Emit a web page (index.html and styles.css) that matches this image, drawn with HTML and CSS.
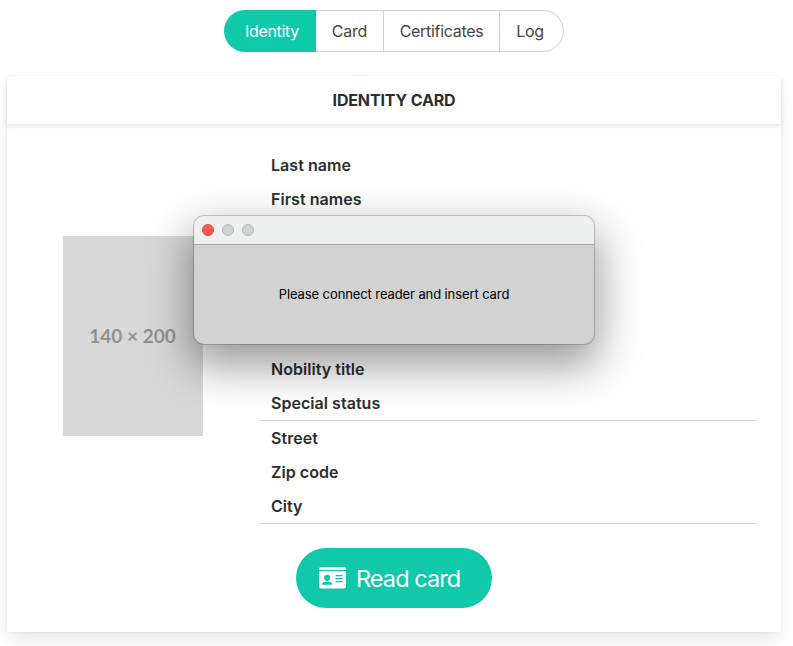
FILE: index.html
```html
<!DOCTYPE html>
<html lang="en">
<head>
<meta charset="utf-8">
<title>Identity card</title>
<link rel="stylesheet" href="styles.css">
</head>
<body>
<nav class="tabs">
  <a class="tab active"><span>Identity</span></a>
  <a class="tab tab-card"><span>Card</span></a>
  <a class="tab tab-certs"><span>Certificates</span></a>
  <a class="tab tab-log"><span>Log</span></a>
</nav>
<main class="card">
  <header class="card-header"><span>Identity card</span></header>
  <section class="content">
    <div class="portrait"><div class="photo"><span>140 × 200</span></div></div>
    <div class="details">
      <div class="group">
        <div class="row">Last name</div>
        <div class="row">First names</div>
        <div class="row"></div>
        <div class="row"></div>
        <div class="row"></div>
        <div class="row"></div>
        <div class="row">Nobility title</div>
        <div class="row">Special status</div>
      </div>
      <div class="group">
        <div class="row">Street</div>
        <div class="row">Zip code</div>
        <div class="row">City</div>
      </div>
    </div>
  </section>
  <button class="read">
    <svg class="id-icon" viewBox="0 0 27 22" width="27" height="22">
      <path fill="#fff" d="M2.3 0h22.4A2.3 2.3 0 0 1 27 2.9H0A2.3 2.3 0 0 1 2.3 0ZM0 4.1h27v15.2a2.3 2.3 0 0 1-2.3 2.3H2.3A2.3 2.3 0 0 1 0 19.3Z"/>
      <circle cx="8.2" cy="10.8" r="3.1" fill="#0fc9aa"/>
      <path fill="#0fc9aa" d="M3 17.8c0-2.1 1.3-3.1 3-3.1.8.4 3.4.4 4.2 0 1.8 0 3.1 1 3.1 3.1ZM16.5 8h7.3v1.3h-7.3ZM16.5 11h7.3v1.3h-7.3ZM16.5 14h7.3v1.3h-7.3Z"/>
    </svg>
    <span>Read card</span>
  </button>
</main>
<div class="dialog" role="dialog">
  <div class="titlebar"><i class="dot close"></i><i class="dot"></i><i class="dot"></i></div>
  <div class="message"><span>Please connect reader and insert card</span></div>
</div>
</body>
</html>
```
FILE: styles.css
```css
* { box-sizing: border-box; }
body {
  margin: 0;
  height: 646px;
  padding: 10px 12px 0 7px;
  overflow: hidden;
  background: #fff;
  color: #2e2e2e;
  font: 16px/24px Inter, "Liberation Sans", sans-serif;
}
.tabs { display: flex; width: 340px; height: 42px; margin: 0 auto 24px; }
.tab {
  display: flex;
  align-items: center;
  justify-content: center;
  border: 1px solid #d3d3d3;
  border-left: 0;
  color: #454545;
  letter-spacing: -.3px;
}
.tab.active {
  width: 92px;
  padding-left: 4px;
  border: 0;
  border-radius: 21px 0 0 21px;
  background: #0fc9aa;
  color: #fff;
}
.tab-card { width: 68px; letter-spacing: -.2px; }
.tab-certs { width: 116px; }
.tab-log { width: 64px; padding-right: 3px; border-radius: 0 21px 21px 0; }
.card {
  height: 556px;
  border-radius: 4px;
  background: #fff;
  box-shadow: 0 8px 16px -2px rgba(10,10,10,.1), 0 0 0 1px rgba(10,10,10,.02);
}
.card-header {
  display: flex;
  align-items: center;
  justify-content: center;
  height: 48px;
  box-shadow: 0 2px 4px rgba(10,10,10,.1);
  font-weight: 650;
  text-transform: uppercase;
  letter-spacing: -.15px;
}
.content {
  display: grid;
  grid-template-columns: 204px 498px;
  column-gap: 24px;
  align-items: center;
  padding: 24px;
}
.portrait { display: flex; justify-content: center; }
.photo {
  display: flex;
  align-items: center;
  justify-content: center;
  width: 140px;
  height: 200px;
  padding-right: 1px;
  background: #d8d8d8;
  color: #919191;
  font: bold 19px/24px Lato, sans-serif;
}
.group { border-bottom: 1px solid #d3d3d3; }
.row {
  height: 34px;
  padding: 5px 12px;
  font-weight: 600;
  letter-spacing: .04px;
}
.read {
  display: flex;
  align-items: center;
  width: 196px;
  height: 60px;
  margin: 0 auto;
  padding: 0 0 0 23px;
  gap: 10px;
  border: 0;
  border-radius: 30px;
  background: #0fc9aa;
  color: #fff;
  font: 23.5px/36px Inter, sans-serif;
  letter-spacing: -.92px;
}
.read span { padding-top: 2px; }
.dialog {
  position: absolute;
  left: 194px;
  top: 216px;
  width: 400px;
  height: 128px;
  border-radius: 10px;
  background: #d2d2d2;
  box-shadow: 0 0 0 1px rgba(0,0,0,.2), 0 18px 44px 4px rgba(0,0,0,.4);
}
.titlebar {
  display: flex;
  align-items: center;
  gap: 8px;
  height: 29px;
  padding-left: 8px;
  border-bottom: 1px solid #a5a6a5;
  border-radius: 10px 10px 0 0;
  background: #eff1f0;
}
.dot {
  width: 12px;
  height: 12px;
  border: 1px solid #b5b7b6;
  border-radius: 50%;
  background: #d1d3d2;
}
.dot.close { border-color: #e0443e; background: #ff5a50; }
.message {
  display: flex;
  align-items: center;
  justify-content: center;
  height: 97px;
  color: #000;
  font-size: 13px;
  letter-spacing: -.1px;
}
```
